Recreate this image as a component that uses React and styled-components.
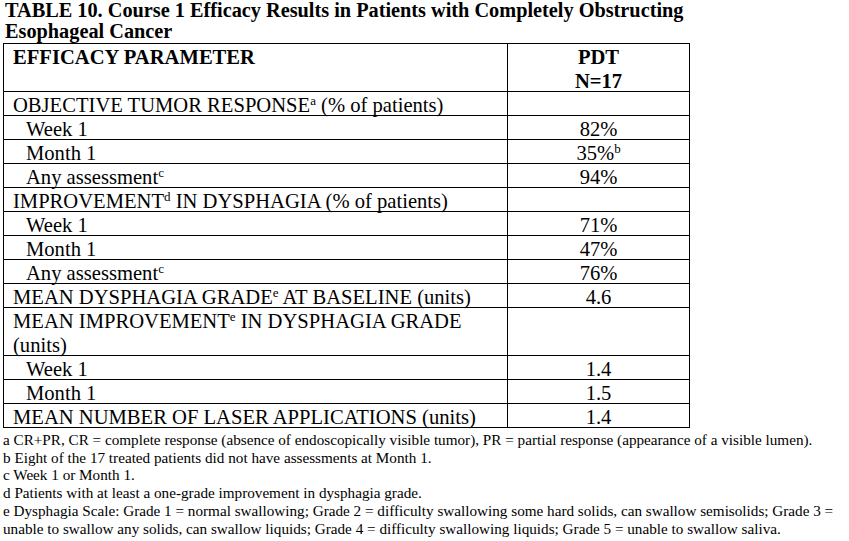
import React from 'react';
import styled, { createGlobalStyle } from 'styled-components';

const GlobalStyle = createGlobalStyle`
  html, body {
    margin: 0;
    padding: 0;
    background: #fff;
  }
  body {
    font-family: "Liberation Serif", "Times New Roman", serif;
    color: #000;
  }
`;

const Page = styled.div`
  width: 849px;
  height: 541px;
  padding: 0 0 0 3px;
  box-sizing: border-box;
  overflow: hidden;
`;

const Title = styled.h1`
  margin: 0;
  padding: 0 0 0 2px;
  width: 700px;
  font-size: 20.3px;
  line-height: 20.5px;
  font-weight: bold;
`;

const Grid = styled.div`
  display: grid;
  grid-template-columns: 504px 182px;
  width: 687px;
  margin-top: 2px;
  border-top: 1px solid #000;
  border-left: 1px solid #000;
  box-sizing: border-box;
  font-size: 20.6px;
  line-height: 24px;
`;

const Cell = styled.div`
  box-sizing: border-box;
  height: ${p => (p.$tall ? 48 : 24)}px;
  padding: 1px 0 0 ${p => (p.$indent ? 22 : 9)}px;
  border-right: 1px solid #000;
  border-bottom: 1px solid #000;
  font-weight: ${p => (p.$head ? 'bold' : 'normal')};
  white-space: nowrap;
`;

const ValueCell = styled.div`
  box-sizing: border-box;
  height: ${p => (p.$tall ? 48 : 24)}px;
  padding-top: 1px;
  border-right: 1px solid #000;
  border-bottom: 1px solid #000;
  text-align: center;
  font-weight: ${p => (p.$head ? 'bold' : 'normal')};
`;

const Sup = styled.sup`
  font-size: 13px;
  line-height: 0;
  vertical-align: 7px;
`;

const Notes = styled.div`
  font-size: 15.2px;
  line-height: 17.7px;
  padding-top: 3px;
  width: 845px;
`;

const Note = styled.div``;

const rows = [
  { label: <>OBJECTIVE TUMOR RESPONSE<Sup>a</Sup> (% of patients)</> },
  { label: 'Week 1', value: '82%', indent: true },
  { label: 'Month 1', value: <>35%<Sup>b</Sup></>, indent: true },
  { label: <>Any assessment<Sup>c</Sup></>, value: '94%', indent: true },
  { label: <>IMPROVEMENT<Sup>d</Sup> IN DYSPHAGIA (% of patients)</> },
  { label: 'Week 1', value: '71%', indent: true },
  { label: 'Month 1', value: '47%', indent: true },
  { label: <>Any assessment<Sup>c</Sup></>, value: '76%', indent: true },
  { label: <>MEAN DYSPHAGIA GRADE<Sup>e</Sup> AT BASELINE (units)</>, value: '4.6' },
  { label: <>MEAN IMPROVEMENT<Sup>e</Sup> IN DYSPHAGIA GRADE<br />(units)</>, tall: true },
  { label: 'Week 1', value: '1.4', indent: true },
  { label: 'Month 1', value: '1.5', indent: true },
  { label: 'MEAN NUMBER OF LASER APPLICATIONS (units)', value: '1.4' },
];

const notes = [
  'a CR+PR, CR = complete response (absence of endoscopically visible tumor), PR = partial response (appearance of a visible lumen).',
  'b Eight of the 17 treated patients did not have assessments at Month 1.',
  'c Week 1 or Month 1.',
  'd Patients with at least a one-grade improvement in dysphagia grade.',
  'e Dysphagia Scale: Grade 1 = normal swallowing; Grade 2 = difficulty swallowing some hard solids, can swallow semisolids; Grade 3 = unable to swallow any solids, can swallow liquids; Grade 4 = difficulty swallowing liquids; Grade 5 = unable to swallow saliva.',
];

export default function App() {
  return (
    <Page>
      <GlobalStyle />
      <Title>TABLE 10. Course 1 Efficacy Results in Patients with Completely Obstructing Esophageal Cancer</Title>
      <Grid>
        <Cell $head $tall>EFFICACY PARAMETER</Cell>
        <ValueCell $head $tall>PDT<br />N=17</ValueCell>
        {rows.map((r, i) => (
          <React.Fragment key={i}>
            <Cell $indent={r.indent} $tall={r.tall}>{r.label}</Cell>
            <ValueCell $tall={r.tall}>{r.value}</ValueCell>
          </React.Fragment>
        ))}
      </Grid>
      <Notes>
        {notes.map((n, i) => <Note key={i}>{n}</Note>)}
      </Notes>
    </Page>
  );
}
